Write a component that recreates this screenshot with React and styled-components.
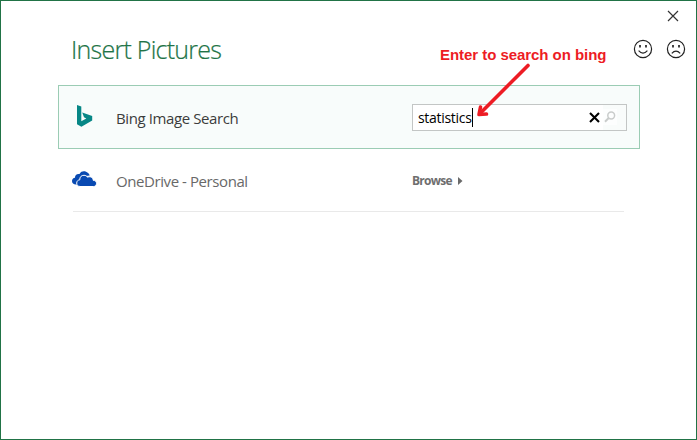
import React from 'react';
import styled, { createGlobalStyle } from 'styled-components';

const GlobalStyle = createGlobalStyle`
  * { box-sizing: border-box; }
  html, body { margin: 0; padding: 0; background: #fff; overflow: hidden; }
`;

const Dialog = styled.main`
  position: relative;
  width: 697px;
  height: 440px;
  border: 1px solid #217346;
  background: #fff;
  font-family: "Open Sans", "Noto Sans", sans-serif;
  display: flex;
  flex-direction: column;
`;

const TitleBar = styled.div`
  height: 31px;
  display: flex;
  justify-content: flex-end;
  padding: 9px 17px 0 0;
`;

const IconButton = styled.button`
  border: 0;
  padding: 0;
  background: none;
  display: flex;
  width: ${(p) => p.$size}px;
  height: ${(p) => p.$size}px;
`;

const Header = styled.header`
  height: 53px;
  display: flex;
  justify-content: space-between;
  padding: 0 10px 0 70px;
`;

const Title = styled.h1`
  margin: 0;
  font-size: 25px;
  line-height: 34px;
  font-weight: 300;
  letter-spacing: -0.75px;
  color: #217346;
  -webkit-text-stroke: 0.2px #217346;
  white-space: nowrap;
`;

const Feedback = styled.div`
  display: flex;
  gap: 13px;
  padding-top: 7px;
`;

const Sources = styled.section`
  display: flex;
  flex-direction: column;
  margin-left: 57px;
  width: 582px;
`;

const BingRow = styled.div`
  height: 64px;
  border: 1px solid #9bccb4;
  background: #f8fcfb;
  display: grid;
  grid-template-columns: 57px 296px 215px;
  align-items: center;
`;

const DriveRow = styled.div`
  height: 63px;
  margin: 0 16px 0 15px;
  border-bottom: 1px solid #e9e9e9;
  display: grid;
  grid-template-columns: 43px 296px 1fr;
  align-items: center;
`;

const Logo = styled.div`
  display: flex;
  padding-left: ${(p) => p.$left}px;
  margin-top: ${(p) => p.$top}px;
  margin-left: ${(p) => p.$shift || 0}px;
`;

const Name = styled.span`
  font-size: 15px;
  line-height: 20px;
  letter-spacing: ${(p) => p.$tracking}px;
  color: ${(p) => p.$color};
  white-space: nowrap;
  padding-top: 2px;
`;

const SearchBox = styled.div`
  width: 215px;
  height: 27px;
  border: 1px solid #c3c6c5;
  background: #fff;
  display: flex;
  align-items: center;
  padding-left: 5px;
`;

const Query = styled.span`
  flex: 1;
  display: flex;
  align-items: flex-end;
  height: 19px;
  font-size: 14px;
  line-height: 18px;
  letter-spacing: -0.3px;
  color: #000;
`;

const Caret = styled.i`
  width: 1px;
  height: 19px;
  background: #000;
`;

const SearchSlot = styled.div`
  width: 23px;
  height: 25px;
  display: flex;
  align-items: center;
  background: #f9fcfb;
  margin-left: 3px;
`;

const SearchButton = styled.button`
  border: 0;
  padding: 0 0 0 1px;
  width: 14px;
  height: 16px;
  background: #fdfefe;
  display: flex;
  align-items: center;
`;

const Browse = styled.a`
  display: flex;
  align-items: center;
  gap: 6px;
  font-size: 12px;
  font-weight: 700;
  line-height: 16px;
  letter-spacing: -0.75px;
  padding-top: 1px;
  color: #6e6e6e;
`;

const Note = styled.div`
  position: absolute;
  left: 439px;
  top: 45px;
  font: bold 15px/18px "Liberation Sans", Arial, sans-serif;
  letter-spacing: -0.05px;
  color: #ed1c24;
  white-space: nowrap;
`;

const Arrow = styled.svg`
  position: absolute;
  left: 473px;
  top: 60px;
`;

function Face({ sad }) {
  return (
    <svg width="20" height="20" viewBox="0 0 20 20" fill="none" stroke="#222" strokeWidth="1.2">
      <circle cx="10" cy="10" r="8.6" />
      <path d="M7 6v2.5M13 6v2.5" strokeWidth="1.7" />
      <path d={sad ? 'M5.8 14.3Q10 9.8 14.2 14.3' : 'M5.6 11.7Q10 16.6 14.4 11.7'} />
    </svg>
  );
}

export default function App() {
  return (
    <>
      <GlobalStyle />
      <Dialog>
        <TitleBar>
          <IconButton $size={12} aria-label="Close">
            <svg width="12" height="12" viewBox="0 0 12 12" stroke="#333" strokeWidth="1.2">
              <path d="M1 1L11 11M11 1L1 11" />
            </svg>
          </IconButton>
        </TitleBar>
        <Header>
          <Title>Insert Pictures</Title>
          <Feedback>
            <IconButton $size={20} aria-label="Smile"><Face /></IconButton>
            <IconButton $size={20} aria-label="Frown"><Face sad /></IconButton>
          </Feedback>
        </Header>
        <Sources>
          <BingRow>
            <Logo $left={18} $top={-2}>
              <svg width="16" height="22" viewBox="0 0 16 22" fill="#078786">
                <path d="M0 0L4.3 1.5V16.3L9.3 13.4L7 12.2L5.2 7.5L15.2 11V15.5L4.4 21.8L0 19.3Z" />
              </svg>
            </Logo>
            <Name $color="#3c3c3c" $tracking={-0.4}>Bing Image Search</Name>
            <SearchBox>
              <Query>statistics<Caret /></Query>
              <svg width="11" height="11" viewBox="0 0 11 11" stroke="#000" strokeWidth="2.1">
                <path d="M1 1L10 10M10 1L1 10" />
              </svg>
              <SearchSlot>
                <SearchButton aria-label="Search">
                  <svg width="12" height="12" viewBox="0 0 12 12" fill="none" stroke="#c9cccb">
                    <circle cx="7.2" cy="4.5" r="3.4" strokeWidth="1.5" />
                    <path d="M4.7 7L1 10.7" strokeWidth="2" />
                  </svg>
                </SearchButton>
              </SearchSlot>
            </SearchBox>
          </BingRow>
          <DriveRow>
            <Logo $left={0} $top={-3} $shift={-1}>
              <svg width="25" height="16" viewBox="0 0 25 16" fill="#094ab2">
                <path d="M4 13.5C1.5 13.5 0 12 0 10C0 8 1.3 7 3 6.8C2.8 4 5 2.5 7.5 3C9 0 12 0 14 .7C16 1.4 17.2 2.7 17.7 4.5L14 5L6 14Z" />
                <path stroke="#fff" strokeWidth="1" d="M8 15.5C5.8 15.3 4.6 14 4.7 12C4.8 10 6 9 7.8 8.8C7.5 6 9.5 4.2 12 4.3C13.6 4.3 14.8 5 15.5 6.2C18.5 5 21 6.5 21.2 9.3C23.5 9.5 24.6 10.8 24.5 12.5C24.4 14.4 23.3 15.5 21.5 15.5Z" />
              </svg>
            </Logo>
            <Name $color="#686868" $tracking={-0.42}>OneDrive - Personal</Name>
            <Browse>
              Browse
              <svg width="5" height="8" viewBox="0 0 5 8" fill="#6a6a6a"><path d="M0 0L4.5 4L0 8Z" /></svg>
            </Browse>
          </DriveRow>
        </Sources>
        <Note>Enter to search on bing</Note>
        <Arrow width="60" height="60" viewBox="0 0 60 60" fill="none" stroke="#ed1c24" strokeWidth="3.6" strokeLinecap="round" strokeLinejoin="round">
          <path d="M54 4.5L6 52.5" />
          <path d="M6.5 46L5 53.5L12.5 53" />
        </Arrow>
      </Dialog>
    </>
  );
}
